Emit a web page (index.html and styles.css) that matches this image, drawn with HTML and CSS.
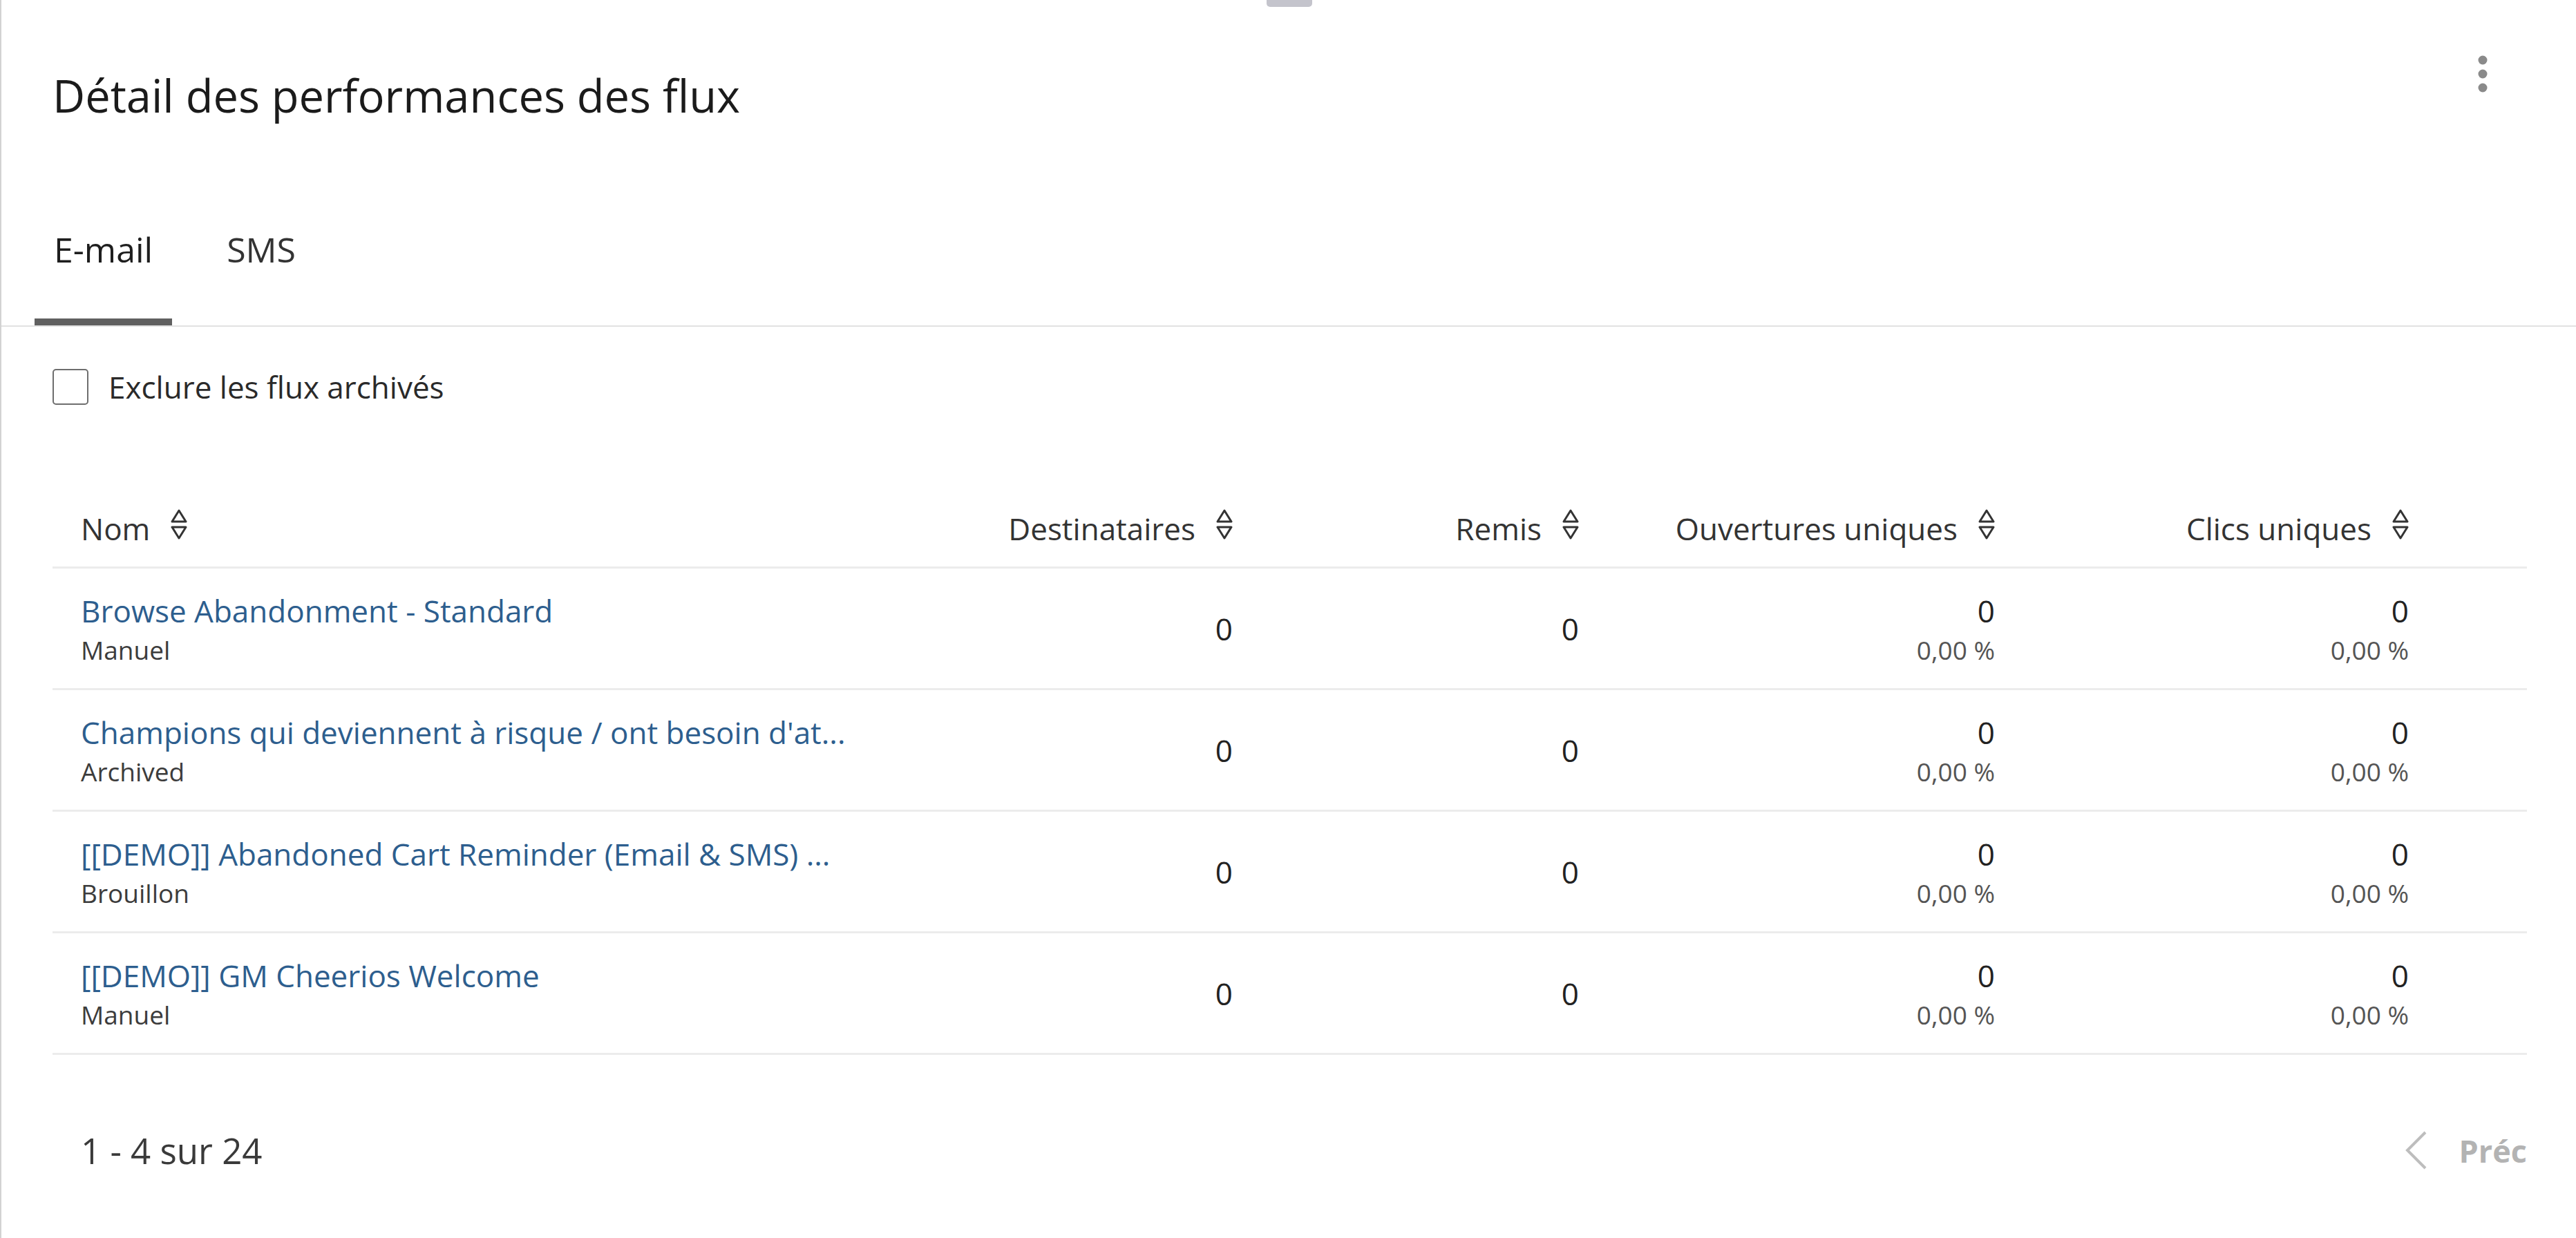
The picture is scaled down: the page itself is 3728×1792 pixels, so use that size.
FILE: index.html
```html
<!DOCTYPE html>
<html lang="fr">
<head>
  <meta charset="UTF-8">
  <title>Détail des performances des flux</title>
  <link rel="stylesheet" href="styles.css">
</head>
<body>
  <div class="panel">
    <span class="drag-handle"></span>

    <header class="panel-head">
      <h2 class="panel-title">Détail des performances des flux</h2>
      <button class="kebab" aria-label="Options">
        <svg width="14" height="54" viewBox="0 0 14 54">
          <circle cx="7" cy="7" r="6.5"/>
          <circle cx="7" cy="27" r="6.5"/>
          <circle cx="7" cy="47" r="6.5"/>
        </svg>
      </button>
    </header>

    <nav class="tabs">
      <a class="tab active" href="#">E-mail</a>
      <a class="tab" href="#">SMS</a>
    </nav>

    <label class="filter">
      <input type="checkbox" class="check">
      <span>Exclure les flux archivés</span>
    </label>

    <div class="table-wrap">
      <table class="flows">
        <colgroup>
          <col style="width: 1248px">
          <col style="width: 500px">
          <col style="width: 501px">
          <col style="width: 602px">
          <col style="width: 730px">
        </colgroup>
        <thead>
          <tr>
            <th class="col-name"><span class="th-inner">Nom <svg class="sort" width="24" height="48" viewBox="0 0 24 48"><path d="M12 3 L22 19 H2 Z M2 27 H22 L12 43 Z"/></svg></span></th>
            <th><span class="th-inner">Destinataires <svg class="sort" width="24" height="48" viewBox="0 0 24 48"><path d="M12 3 L22 19 H2 Z M2 27 H22 L12 43 Z"/></svg></span></th>
            <th><span class="th-inner">Remis <svg class="sort" width="24" height="48" viewBox="0 0 24 48"><path d="M12 3 L22 19 H2 Z M2 27 H22 L12 43 Z"/></svg></span></th>
            <th><span class="th-inner">Ouvertures uniques <svg class="sort" width="24" height="48" viewBox="0 0 24 48"><path d="M12 3 L22 19 H2 Z M2 27 H22 L12 43 Z"/></svg></span></th>
            <th><span class="th-inner">Clics uniques <svg class="sort" width="24" height="48" viewBox="0 0 24 48"><path d="M12 3 L22 19 H2 Z M2 27 H22 L12 43 Z"/></svg></span></th>
          </tr>
        </thead>
        <tbody>
          <tr>
            <td class="col-name"><a class="flow-link" href="#">Browse Abandonment - Standard</a><div class="flow-status">Manuel</div></td>
            <td>0</td>
            <td>0</td>
            <td><div class="num">0</div><div class="pct">0,00 %</div></td>
            <td><div class="num">0</div><div class="pct">0,00 %</div></td>
          </tr>
          <tr>
            <td class="col-name"><a class="flow-link" href="#">Champions qui deviennent à risque / ont besoin d'at...</a><div class="flow-status">Archived</div></td>
            <td>0</td>
            <td>0</td>
            <td><div class="num">0</div><div class="pct">0,00 %</div></td>
            <td><div class="num">0</div><div class="pct">0,00 %</div></td>
          </tr>
          <tr>
            <td class="col-name"><a class="flow-link" href="#">[[DEMO]] Abandoned Cart Reminder (Email &amp; SMS) ...</a><div class="flow-status">Brouillon</div></td>
            <td>0</td>
            <td>0</td>
            <td><div class="num">0</div><div class="pct">0,00 %</div></td>
            <td><div class="num">0</div><div class="pct">0,00 %</div></td>
          </tr>
          <tr>
            <td class="col-name"><a class="flow-link" href="#">[[DEMO]] GM Cheerios Welcome</a><div class="flow-status">Manuel</div></td>
            <td>0</td>
            <td>0</td>
            <td><div class="num">0</div><div class="pct">0,00 %</div></td>
            <td><div class="num">0</div><div class="pct">0,00 %</div></td>
          </tr>
        </tbody>
      </table>

      <div class="pager">
        <span class="pager-count">1 - 4 sur 24</span>
        <button class="pager-prev" disabled>
          <svg width="36" height="58" viewBox="0 0 36 58"><path d="M31 3 L5 29 L31 55"/></svg>
          <span>Préc</span>
        </button>
      </div>
    </div>
  </div>
</body>
</html>
```

FILE: styles.css
```css
* {
  box-sizing: border-box;
}

body {
  margin: 0;
  font-family: "Open Sans", "Noto Sans", sans-serif;
  color: #222;
  background: #fff;
}

.panel {
  position: relative;
  min-height: 100vh;
  border-left: 2px solid #d2d2d2;
  background: #fff;
}

.drag-handle {
  position: absolute;
  top: 0;
  left: 1831px;
  width: 66px;
  height: 10px;
  border-radius: 0 0 5px 5px;
  background: #c4c4cc;
}

/* header */
.panel-head {
  display: flex;
  justify-content: space-between;
  align-items: flex-start;
  padding: 80px 128px 0 74px;
}

.panel-title {
  margin: 18px 0 0;
  font-size: 65px;
  line-height: 80px;
  font-weight: 400;
  color: #1b1b1b;
}

.kebab {
  padding: 0;
  border: none;
  background: none;
  cursor: pointer;
  line-height: 0;
}

.kebab circle {
  fill: #8a8a8a;
}

/* tabs */
.tabs {
  display: flex;
  gap: 51px;
  margin-top: 151px;
  padding-left: 48px;
  border-bottom: 2px solid #e2e2e2;
}

.tab {
  padding: 0 28px 68px;
  font-size: 50px;
  line-height: 64px;
  color: #333;
  text-decoration: none;
  border-bottom: 10px solid transparent;
}

.tab.active {
  color: #1e1e1e;
  border-bottom-color: #606060;
}

/* filter */
.filter {
  display: flex;
  align-items: center;
  gap: 29px;
  margin-top: 61px;
  padding-left: 74px;
  font-size: 44px;
  line-height: 52px;
  color: #2a2a2a;
  cursor: pointer;
}

.check {
  appearance: none;
  width: 52px;
  height: 52px;
  margin: 0;
  border: 2px solid #6e6e6e;
  border-radius: 5px;
  background: #fff;
}

/* table */
.table-wrap {
  padding: 0 71px 0 74px;
}

.flows {
  width: 100%;
  margin-top: 123px;
  table-layout: fixed;
  border-collapse: separate;
  border-spacing: 0;
}

.flows th,
.flows td {
  padding: 0 40px 0 0;
  text-align: right;
  vertical-align: middle;
  border-bottom: 3px solid #ececec;
}

.flows th {
  height: 114px;
  font-size: 44px;
  font-weight: 400;
  color: #333;
}

.flows td {
  height: 176px;
  font-size: 44px;
  line-height: 58px;
  color: #222;
}

.flows th:last-child,
.flows td:last-child {
  padding-right: 171px;
}

.flows .col-name {
  padding-left: 41px;
  text-align: left;
}

.th-inner {
  display: inline-flex;
  align-items: center;
  gap: 30px;
  white-space: nowrap;
}

.sort {
  margin-top: -10px;
}

.sort path {
  fill: none;
  stroke: #333;
  stroke-width: 3;
  stroke-linejoin: round;
}

.flow-link {
  display: block;
  font-size: 44px;
  line-height: 58px;
  color: #2d5e8e;
  text-decoration: none;
  white-space: nowrap;
}

.flow-status {
  margin-top: 4px;
  font-size: 37px;
  line-height: 48px;
  color: #3c3c3c;
}

.num {
  line-height: 58px;
}

.pct {
  margin-top: 4px;
  font-size: 37px;
  line-height: 48px;
  color: #555;
}

/* pagination */
.pager {
  display: flex;
  justify-content: space-between;
  align-items: center;
  height: 120px;
  margin-top: 78px;
  padding-left: 41px;
}

.pager-count {
  font-size: 51px;
  color: #3a3a3a;
}

.pager-prev {
  display: flex;
  align-items: center;
  gap: 44px;
  padding: 0;
  border: none;
  background: none;
  font-family: inherit;
  font-size: 45px;
  font-weight: 700;
  color: #b3b3b3;
}

.pager-prev path {
  fill: none;
  stroke: #bdbdbd;
  stroke-width: 4;
}
```
